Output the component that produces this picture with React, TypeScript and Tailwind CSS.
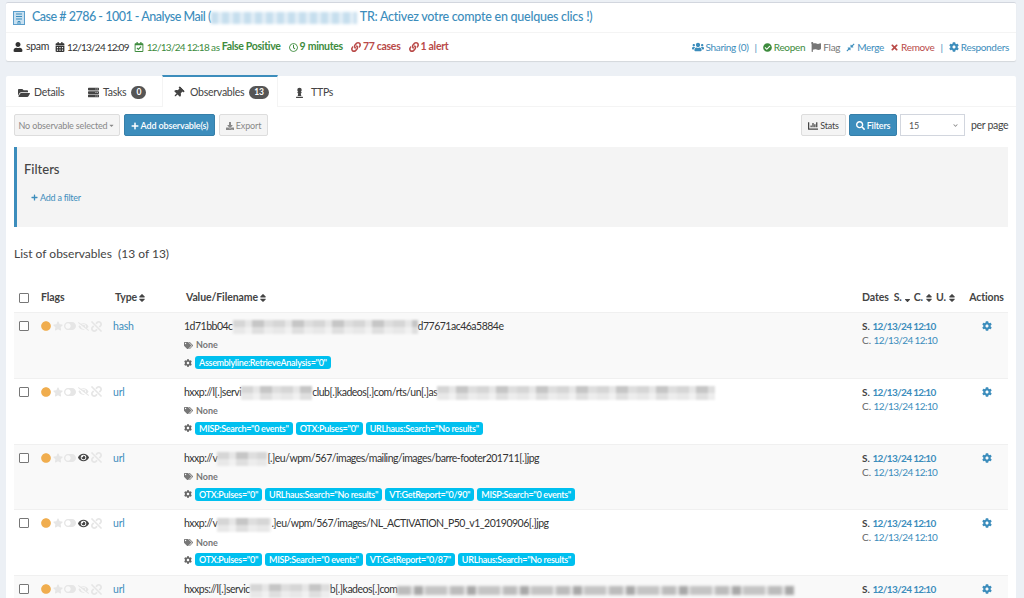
import { ReactNode } from "react";
import {
  FaUser, FaCalendarAlt, FaRegCalendarCheck, FaRegClock, FaLink, FaUsers, FaCheckCircle, FaFlag,
  FaCompressAlt, FaTimes, FaCog, FaFolderOpen, FaServer, FaThumbtack, FaChessPawn, FaPlus, FaDownload, FaChartBar,
  FaSearch, FaSort, FaSortDown, FaTags, FaCircle, FaStar, FaToggleOn, FaEye, FaEyeSlash, FaUnlink, FaCaretDown, FaChevronDown,
} from "react-icons/fa";

function Blur({ className }: { className: string }) {
  return (
    <span
      className={`inline-block h-[14px] align-middle blur-[1px] bg-[linear-gradient(180deg,transparent_50%,rgba(255,255,255,0.45)_50%),repeating-linear-gradient(90deg,#d6d6d6_0,#d6d6d6_12px,#e6e6e6_12px,#e6e6e6_19px,#c6c6c6_19px,#c6c6c6_31px,#dedede_31px,#dedede_40px)] ${className}`}
    />
  );
}

function BlurText({ className }: { className: string }) {
  return (
    <span
      className={`inline-block h-[9px] align-middle blur-[1.5px] bg-[repeating-linear-gradient(90deg,#bcbcbc_0,#bcbcbc_14px,#e8e8e8_14px,#e8e8e8_17px,#a8a8a8_17px,#a8a8a8_26px,#ececec_26px,#ececec_28px,#c4c4c4_28px,#c4c4c4_50px,#e8e8e8_50px,#e8e8e8_53px)] ${className}`}
    />
  );
}

function Report({ children }: { children: string }) {
  return (
    <span className="bg-[#00c0ef] text-white text-[9px] tracking-[-0.3px] font-semibold leading-none rounded-[3px] px-[4px] h-[13px] flex items-center whitespace-nowrap">
      {children}
    </span>
  );
}

function TabItem({ icon, label, count, active, className }: { icon: ReactNode; label: string; count?: number; active?: boolean; className: string }) {
  return (
    <div className={`flex items-center h-[32px] pt-[1px] text-[10.5px] tracking-[-0.25px] text-[#444] ${active ? "bg-white border-t-[2px] border-t-[#3c8dbc] border-x border-x-[#f4f4f4] -mt-[1px]" : ""} ${className}`}>
      {icon}
      <span>{label}</span>
      {count !== undefined && (
        <span className="ml-[5px] bg-[#555] text-white text-[8.5px] font-bold rounded-[8px] px-[5px] h-[13px] flex items-center">{count}</span>
      )}
    </div>
  );
}

type Row = { type: string; value: ReactNode; reports: string[]; eye?: boolean; striped: boolean };

const rows: Row[] = [
  {
    type: "hash",
    striped: true,
    value: <>1d71bb04c<Blur className="w-[185px]" />d77671ac46a5884e</>,
    reports: ['Assemblyline:RetrieveAnalysis="0"'],
  },
  {
    type: "url",
    striped: false,
    value: <>hxxp://l[.]servi<Blur className="w-[71px]" />club[.]kadeos[.]com/rts/un[.]as<Blur className="w-[278px]" /></>,
    reports: ['MISP:Search="0 events"', 'OTX:Pulses="0"', 'URLhaus:Search="No results"'],
  },
  {
    type: "url",
    striped: true,
    eye: true,
    value: <>hxxp://v<Blur className="w-[50px]" />[.]eu/wpm/567/images/mailing/images/barre-footer201711[.]jpg</>,
    reports: ['OTX:Pulses="0"', 'URLhaus:Search="No results"', 'VT:GetReport="0/90"', 'MISP:Search="0 events"'],
  },
  {
    type: "url",
    striped: false,
    eye: true,
    value: <>hxxp://v<Blur className="w-[54px]" />.]eu/wpm/567/images/NL_ACTIVATION_P50_v1_20190906[.]jpg</>,
    reports: ['OTX:Pulses="0"', 'MISP:Search="0 events"', 'VT:GetReport="0/87"', 'URLhaus:Search="No results"'],
  },
  {
    type: "url",
    striped: true,
    value: <>hxxps://l[.]servic<Blur className="w-[80px]" />b[.]kadeos[.]com<BlurText className="w-[397px]" /></>,
    reports: [],
  },
];

function Checkbox() {
  return <span className="block w-[10px] h-[10px] border-[1.5px] border-[#777] rounded-[1px] bg-white" />;
}

function ObservableRow({ row }: { row: Row }) {
  return (
    <div className={`flex h-[65.8px] pt-[6px] border-t border-[#f0f0f0] ${row.striped ? "bg-[#f9f9f9]" : "bg-white"}`}>
      <div className="w-[27px] pl-[5px] pt-[2px]"><Checkbox /></div>
      <div className="w-[72px] flex items-center text-[#e6e6e6] h-[14px]">
        <FaCircle className="text-[#f0ad4e] text-[10px]" />
        <FaStar className="text-[10px] ml-[2px]" />
        <FaToggleOn className="text-[12px] ml-[1px] -scale-x-100" />
        {row.eye ? <FaEye className="text-[#444] text-[11px] ml-[2px]" /> : <FaEyeSlash className="text-[11px] ml-[2px]" />}
        <FaUnlink className="text-[11px] ml-[2px]" />
      </div>
      <div className="w-[71px] text-[#3c8dbc] text-[10.5px] tracking-[-0.2px] leading-[14px]">{row.type}</div>
      <div className="w-[678px]">
        <div className="text-[10.5px] tracking-[-0.5px] text-[#333] leading-[14px] h-[14px] whitespace-nowrap">{row.value}</div>
        {row.reports.length > 0 && (
          <>
            <div className="flex items-center gap-[3px] mt-[6px] h-[12px] text-[9px] font-bold text-[#777]">
              <FaTags className="text-[9px]" />
              <span>None</span>
            </div>
            <div className="flex items-center gap-[3px] mt-[5px]">
              <FaCog className="text-[#666] text-[8px]" />
              {row.reports.map((r) => <Report key={r}>{r}</Report>)}
            </div>
          </>
        )}
      </div>
      <div className="w-[105px] text-[10px] leading-[14px]">
        <div className="text-[#444]"><b>S.</b> <span className="text-[#3c8dbc] font-bold tracking-[-0.65px]">12/13/24 12:10</span></div>
        <div className="text-[#666]">C. <span className="text-[#3c8dbc] tracking-[-0.6px]">12/13/24 12:10</span></div>
      </div>
      <div className="w-[39px] flex justify-center pt-[2px]">
        <FaCog className="text-[#3c8dbc] text-[10px]" />
      </div>
    </div>
  );
}

export default function App() {
  return (
    <div className="h-[598px] w-[1024px] overflow-hidden bg-[#ecf0f5] font-['Lato',sans-serif] pl-[6px] pr-[8px] pt-[2px] text-[#333]">
      <div className="bg-white border-t-[1px] border-[#d2d6de] rounded-[2px] shadow-[0_1px_1px_rgba(0,0,0,0.1)] h-[59px]">
        <div className="flex items-center h-[30px] pl-[7px] border-b border-[#f4f4f4] text-[12.5px] tracking-[-0.25px] text-[#3c8dbc] font-medium whitespace-nowrap">
          <svg viewBox="0 0 12 14" className="w-[12px] h-[14px] mr-[7px]">
            <rect x="0.5" y="0.5" width="11" height="13" fill="#c8e0f0" stroke="#5b9ecb" />
            <path d="M3 3h6M3 5.5h6M3 8h6M5 13v-2.5h2V13" stroke="#3c8dbc" fill="none" />
          </svg>
          <span className="tracking-[-0.5px]">Case # 2786 - 1001 - Analyse Mail (</span>
          <span className="inline-block w-[146px] h-[12px] blur-[1.5px] bg-[repeating-linear-gradient(90deg,#c6deee_0,#c6deee_7px,#e4eff7_7px,#e4eff7_11px)]" />
          <span className="ml-[3px]">TR: Activez votre compte en quelques clics !)</span>
        </div>
        <div className="flex items-center justify-between h-[28px] pl-[7px] pr-[7px] text-[10.5px] tracking-[-0.3px] whitespace-nowrap">
          <div className="flex items-center">
            <FaUser className="text-[10px] text-[#333] mr-[3px]" />
            <span className="mr-[6px]">spam</span>
            <FaCalendarAlt className="text-[10px] mr-[2px]" />
            <span className="mr-[5px] text-[10px] tracking-[-0.75px]">12/13/24 12:09</span>
            <FaRegCalendarCheck className="text-[10px] text-[#3d8b3d] mr-[3px]" />
            <span className="text-[#3d8b3d] text-[10px] tracking-[-0.7px]">12/13/24 12:18</span>
            <span className="text-[#3d8b3d] text-[10px] ml-[2px] mr-[2px]">as</span>
            <b className="text-[#3d8b3d] mr-[8px]">False Positive</b>
            <FaRegClock className="text-[9px] text-[#3d8b3d] mr-[2px]" />
            <b className="text-[#3d8b3d] mr-[8px]">9 minutes</b>
            <FaLink className="text-[10px] text-[#b94a48] mr-[2px]" />
            <b className="text-[#b94a48] mr-[8px]">77 cases</b>
            <FaLink className="text-[10px] text-[#b94a48] mr-[2px]" />
            <b className="text-[#b94a48]">1 alert</b>
          </div>
          <div className="flex items-center text-[10px]">
            <FaUsers className="text-[12px] text-[#3c8dbc] mr-[1px]" />
            <span className="text-[#3c8dbc]">Sharing (0)</span>
            <span className="text-[#3c8dbc] mx-[6px]">|</span>
            <FaCheckCircle className="text-[9px] text-[#3d8b3d] mr-[2px]" />
            <span className="text-[#3d8b3d] mr-[6px]">Reopen</span>
            <FaFlag className="text-[10px] text-[#777] mr-[2px]" />
            <span className="text-[#777] mr-[6px]">Flag</span>
            <FaCompressAlt className="text-[9px] text-[#3c8dbc] mr-[2px]" />
            <span className="text-[#3c8dbc] mr-[6px]">Merge</span>
            <FaTimes className="text-[9px] text-[#b94a48] mr-[2px]" />
            <span className="text-[#b94a48]">Remove</span>
            <span className="text-[#3c8dbc] mx-[6px]">|</span>
            <FaCog className="text-[10px] text-[#3c8dbc] mr-[2px]" />
            <span className="text-[#3c8dbc]">Responders</span>
          </div>
        </div>
      </div>

      <div className="bg-white rounded-[2px] mt-[15px] h-[530px]">
        <div className="flex h-[31px] border-b border-[#f4f4f4]">
          <TabItem className="w-[71px] pl-[12px]" icon={<FaFolderOpen className="text-[12px] mr-[4px]" />} label="Details" />
          <TabItem className="w-[85px] pl-[11px]" icon={<FaServer className="text-[11px] mr-[4px]" />} label="Tasks" count={0} />
          <TabItem active className="w-[116px] pl-[10px]" icon={<FaThumbtack className="text-[11px] mr-[6px] rotate-45" />} label="Observables" count={13} />
          <TabItem className="w-[60px] pl-[16px]" icon={<FaChessPawn className="text-[11px] mr-[6px]" />} label="TTPs" />
        </div>

        <div className="flex items-center justify-between h-[22px] mt-[7px] mx-[8px] text-[9px] tracking-[-0.15px] whitespace-nowrap">
          <div className="flex gap-[4px]">
            <span className="h-[22px] w-[106px] pt-[1px] flex items-center justify-center bg-[#f4f4f4] border border-[#ddd] rounded-[2px] text-[#888]">
              No observable selected<FaCaretDown className="text-[7px] ml-[1px]" />
            </span>
            <span className="h-[22px] w-[91px] pt-[1px] flex items-center justify-center bg-[#3c8dbc] border border-[#367fa9] rounded-[2px] text-white font-semibold">
              <FaPlus className="text-[8px] mr-[2px]" />Add observable(s)
            </span>
            <span className="h-[22px] w-[49px] pt-[1px] flex items-center justify-center bg-[#f4f4f4] border border-[#ddd] rounded-[2px] text-[#888]">
              <FaDownload className="text-[8px] mr-[2px]" />Export
            </span>
          </div>
          <div className="flex items-center gap-[3px]">
            <span className="h-[22px] w-[45px] pt-[1px] flex items-center justify-center bg-[#f4f4f4] border border-[#ddd] rounded-[2px] text-[#444]">
              <FaChartBar className="text-[10px] mr-[2px]" />Stats
            </span>
            <span className="h-[22px] w-[48px] pt-[1px] flex items-center justify-center bg-[#3c8dbc] border border-[#367fa9] rounded-[2px] text-white font-semibold">
              <FaSearch className="text-[9px] mr-[2px]" />Filters
            </span>
            <span className="h-[22px] w-[65px] pt-[1px] flex items-center justify-between pl-[8px] pr-[6px] border border-[#d2d6de] text-[#555]">
              15<FaChevronDown className="text-[5px] text-[#888]" />
            </span>
            <span className="ml-[3px] pt-[1px] text-[10.5px] tracking-[-0.3px] text-[#444] w-[37px]">per page</span>
          </div>
        </div>

        <div className="mt-[11px] mx-[8px] h-[80px] bg-[#f4f4f4] border-l-[3px] border-[#3c8dbc] pl-[7px] pt-[15px]">
          <div className="text-[13px] font-medium text-[#444] leading-[14px]">Filters</div>
          <div className="flex items-center text-[9px] tracking-[-0.25px] text-[#3c8dbc] mt-[15px] ml-[7px]">
            <FaPlus className="text-[7px] mr-[2px]" />Add a filter
          </div>
        </div>

        <div className="mt-[19px] mx-[8px] text-[12px] text-[#444] leading-[16px]">List of observables&nbsp; (13 of 13)</div>

        <div className="mx-[8px] mt-[24px]">
          <div className="flex items-center h-[26px] pb-[2px] text-[10.5px] tracking-[-0.1px] font-bold text-[#444] whitespace-nowrap">
            <div className="w-[27px] pl-[5px]"><Checkbox /></div>
            <div className="w-[74px]">Flags</div>
            <div className="w-[71px] flex items-center">Type<FaSort className="text-[10px]" /></div>
            <div className="w-[676px] flex items-center">Value/Filename<FaSort className="text-[10px]" /></div>
            <div className="w-[105px] flex items-center">
              <span className="mr-[5px]">Dates</span>
              <span>S.</span><FaSortDown className="text-[9px] mr-[2px] ml-[1px]" />
              <span>C.</span><FaSort className="text-[10px] mr-[2px] ml-[1px]" />
              <span>U.</span><FaSort className="text-[10px] ml-[1px]" />
            </div>
            <div className="w-[39px] text-center">Actions</div>
          </div>
          {rows.map((row, i) => <ObservableRow key={i} row={row} />)}
        </div>
      </div>
    </div>
  );
}
